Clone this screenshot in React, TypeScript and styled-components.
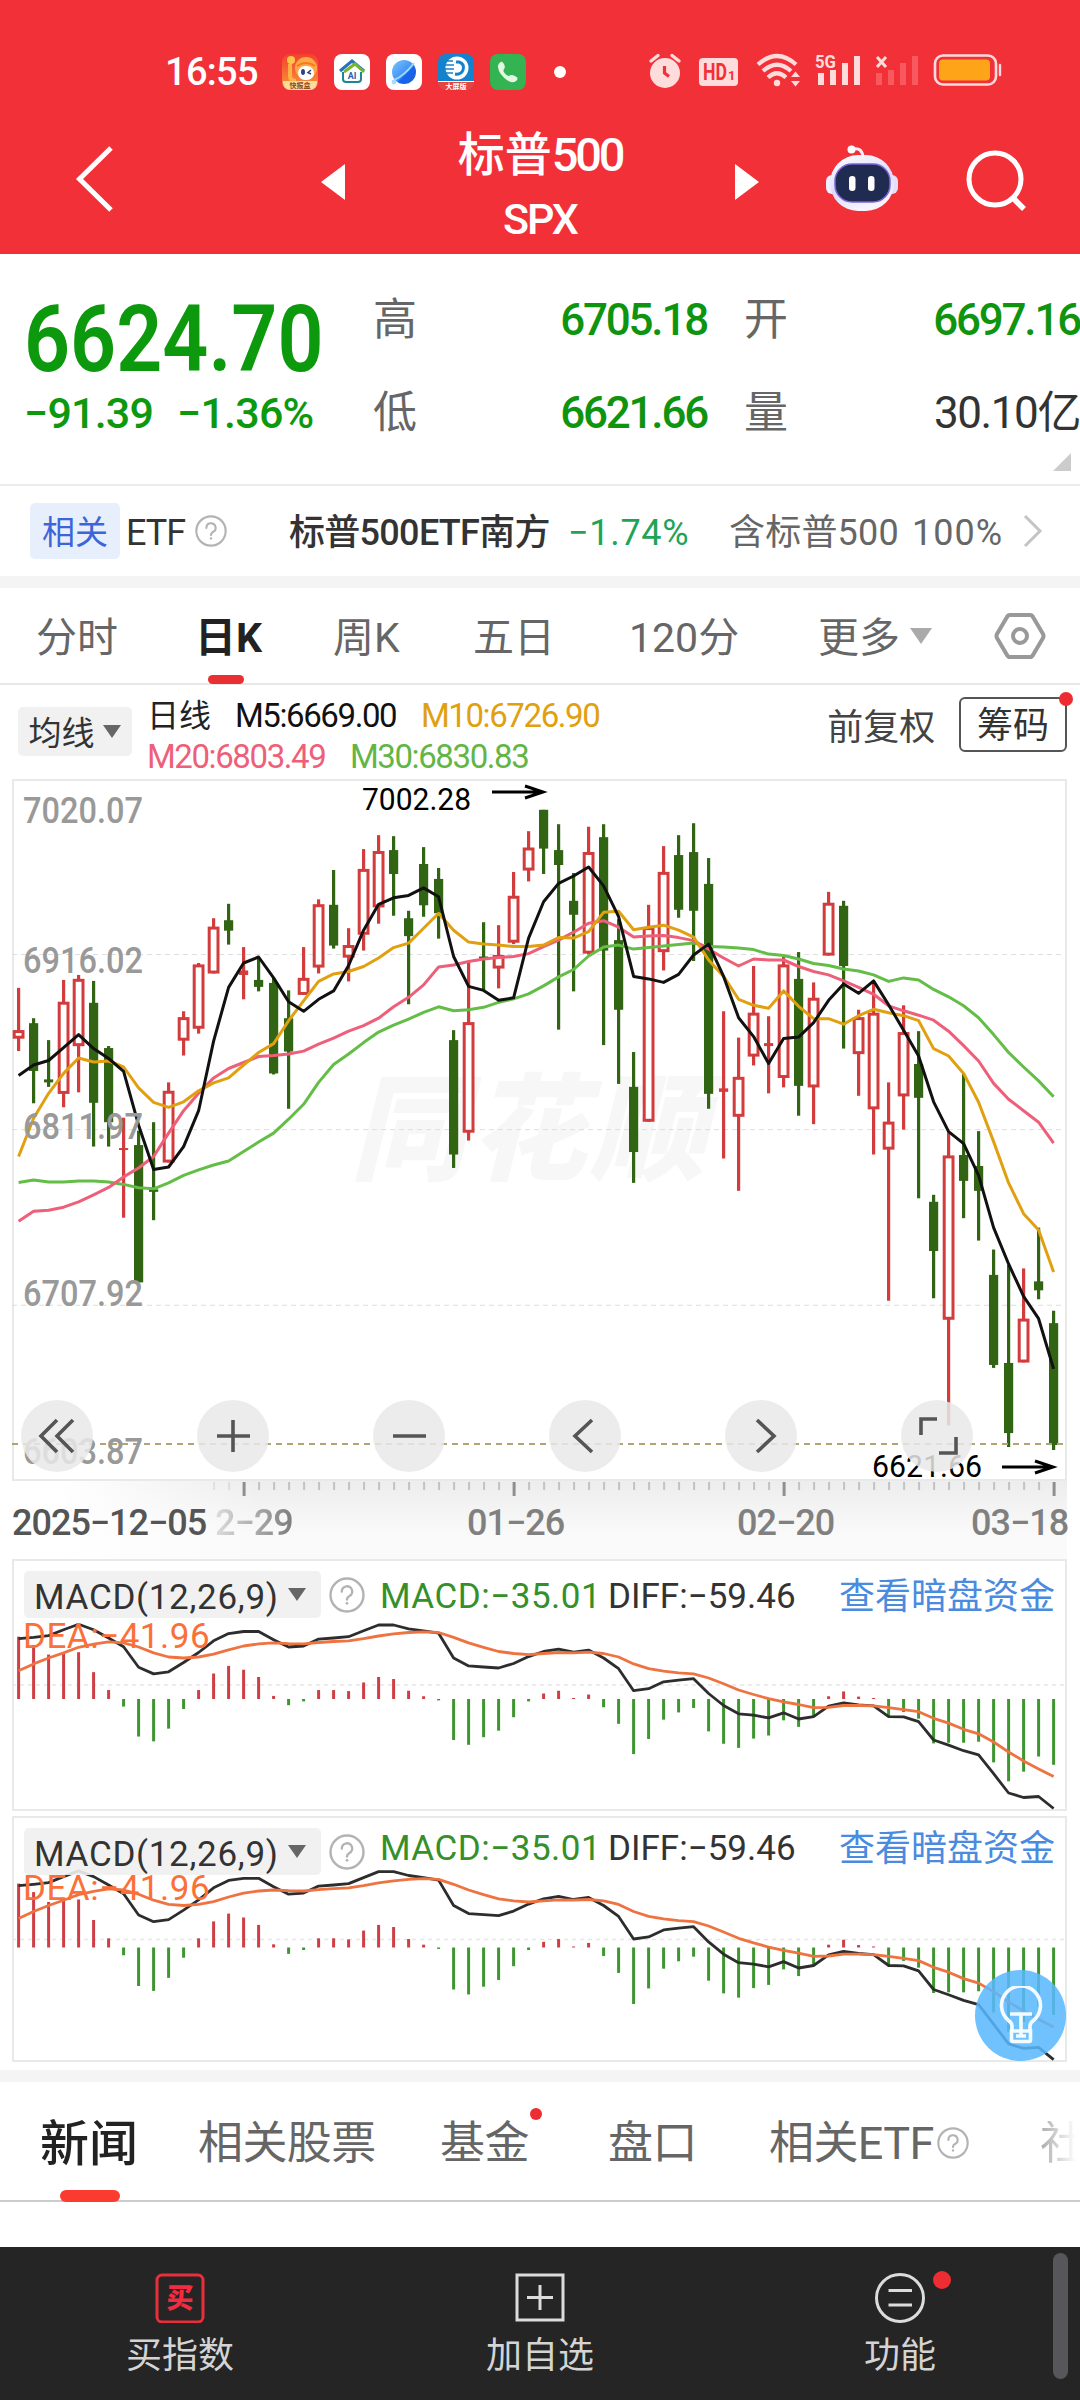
import React from 'react';
import styled, { createGlobalStyle, css } from 'styled-components';

const STEP = 15;
const FIRST_X = 6.6;

// high, body top, body bottom, low (chart units, downwards), 1 = up day
const CANDLES: Array<Array<number>> = [
    [438, 523, 540, 565, 1], [499, 509, 605, 670, 0], [543, 622, 628, 637, 0], [422, 466, 651, 678, 1],
    [412, 420, 555, 648, 1], [424, 468, 669, 757, 0], [555, 559, 708, 757, 0], [699, 760, 764, 900, 1],
    [725, 754, 1030, 1030, 0], [708, 843, 848, 905, 0], [628, 645, 789, 789, 1], [485, 497, 544, 574, 1],
    [388, 391, 520, 530, 1], [298, 315, 409, 409, 1], [269, 302, 323, 351, 0], [356, 403, 412, 461, 1],
    [378, 422, 436, 445, 0], [418, 428, 610, 612, 0], [443, 499, 566, 681, 0], [356, 418, 452, 452, 1],
    [260, 270, 397, 409, 1], [201, 271, 353, 359, 0], [318, 352, 377, 425, 1], [159, 199, 331, 363, 1],
    [131, 163, 276, 309, 1], [133, 161, 209, 293, 0], [283, 298, 334, 471, 0], [155, 189, 272, 295, 0],
    [197, 219, 288, 339, 0], [523, 543, 773, 800, 0], [385, 507, 729, 745, 1], [306, 375, 379, 442, 0],
    [312, 372, 399, 439, 1], [205, 253, 347, 350, 1], [123, 156, 202, 224, 1], [80, 80, 158, 209, 0],
    [109, 161, 191, 522, 0], [207, 263, 291, 445, 0], [114, 165, 369, 371, 1], [109, 135, 363, 553, 0],
    [300, 342, 482, 631, 0], [567, 637, 768, 830, 0], [271, 316, 707, 707, 1], [153, 205, 366, 403, 1],
    [131, 171, 281, 297, 0], [107, 165, 283, 384, 0], [177, 229, 651, 681, 0], [485, 640, 647, 781, 1],
    [538, 617, 697, 846, 1], [394, 488, 576, 594, 1], [495, 549, 555, 650, 1], [375, 391, 619, 638, 1],
    [366, 420, 635, 695, 0], [427, 458, 638, 712, 1], [245, 267, 373, 373, 1], [263, 273, 394, 560, 0],
    [482, 497, 571, 655, 1], [430, 488, 682, 773, 1], [628, 707, 763, 1067, 1], [473, 527, 656, 723, 1],
    [525, 591, 659, 861, 0], [854, 868, 967, 1062, 0], [728, 775, 1105, 1318, 1], [610, 774, 826, 901, 0],
    [726, 796, 846, 946, 0], [964, 1015, 1196, 1202, 0], [995, 1192, 1333, 1361, 0], [1002, 1103, 1191, 1191, 1],
    [920, 1028, 1046, 1064, 0], [1087, 1112, 1357, 1367, 0],
];

const AVERAGES = [
    {
        color: '#63bd46',
        values: [
            829, 824, 828, 828, 826, 826, 828, 833, 840, 842, 830, 815, 804, 794, 786, 767, 748, 730, 702, 672, 628, 592, 571,
            548, 527, 513, 501, 487, 476, 484, 482, 477, 467, 460, 450, 434, 416, 401, 374, 356, 352, 360, 357, 354, 351, 348,
            355, 356, 358, 361, 370, 373, 380, 389, 393, 400, 404, 412, 425, 418, 422, 441, 456, 474, 498, 532, 568, 597, 625,
            657,
        ],
    },
    {
        color: '#ee5f79',
        values: [
            907, 887, 885, 879, 868, 854, 839, 818, 800, 777, 730, 685, 650, 619, 600, 588, 576, 574, 571, 565, 551, 539, 525,
            514, 499, 476, 457, 432, 396, 392, 385, 380, 377, 375, 369, 355, 342, 326, 308, 303, 316, 336, 334, 333, 337, 343,
            360, 378, 394, 380, 382, 382, 395, 405, 412, 424, 437, 451, 474, 484, 493, 503, 525, 554, 585, 630, 662, 685, 708,
            750,
        ],
    },
    {
        color: '#e0a010',
        values: [
            777, 700, 650, 610, 579, 587, 585, 597, 639, 668, 678, 667, 645, 629, 619, 593, 568, 550, 504, 464, 425, 410, 405,
            395, 378, 357, 348, 318, 288, 322, 346, 350, 352, 355, 355, 352, 337, 338, 325, 286, 284, 321, 316, 312, 322, 336,
            382, 415, 461, 473, 479, 444, 475, 500, 500, 511, 494, 481, 488, 494, 504, 560, 575, 610, 668, 747, 830, 892, 925,
            1009,
        ],
    },
    {
        color: '#111111',
        values: [
            614, 593, 584, 558, 532, 560, 580, 606, 714, 803, 798, 757, 685, 545, 437, 388, 376, 418, 466, 485, 461, 444, 393,
            322, 270, 257, 252, 237, 255, 375, 435, 443, 463, 458, 338, 265, 228, 213, 195, 233, 295, 415, 420, 427, 411, 372,
            350, 415, 498, 536, 590, 540, 537, 508, 463, 430, 449, 424, 472, 523, 575, 667, 727, 751, 815, 920, 993, 1058,
            1103, 1204,
        ],
    },
];

const MACD_BARS = [
    181, 157, 129, 132, 136, 78, 26, -22, -109, -123, -86, -29, 26, 74, 96, 85, 64, 9, -18, -7, 26, 26, 23, 48, 64, 58, 24,
    8, -4, -119, -133, -111, -92, -53, -7, 16, 24, 3, 13, -24, -72, -160, -116, -60, -39, -26, -94, -130, -142, -115, -106,
    -62, -81, -52, 8, 22, 7, 3, -52, -38, -57, -129, -127, -127, -124, -184, -239, -211, -167, -191,
];

const MACD_ZERO = 462;

const DIFF = [
    287, 283, 278, 261, 245, 261, 285, 310, 370, 389, 383, 356, 327, 293, 272, 266, 266, 290, 311, 308, 288, 285, 281, 264,
    247, 247, 258, 264, 271, 343, 366, 369, 372, 359, 339, 324, 317, 326, 320, 343, 374, 438, 432, 412, 407, 403, 446, 481,
    505, 509, 517, 502, 520, 513, 483, 473, 479, 482, 513, 514, 528, 581, 596, 612, 624, 679, 735, 748, 745, 780,
];

const DEA = [
    380, 360, 343, 328, 312, 303, 296, 299, 311, 328, 340, 343, 340, 332, 319, 308, 302, 299, 301, 302, 298, 295, 293, 287,
    279, 273, 269, 267, 269, 283, 299, 312, 324, 330, 333, 330, 327, 328, 326, 330, 340, 360, 374, 381, 386, 389, 401, 418,
    436, 449, 461, 470, 478, 487, 486, 481, 481, 482, 487, 493, 499, 518, 532, 550, 563, 587, 616, 642, 665, 687,
];

const xAt = (i: number) => FIRST_X + i * STEP;
const priceY = (v: number) => v / 2.0103 - 9;

const toPoints = (values: Array<number>, y: (v: number) => number) =>
    values.map((v, i) => `${xAt(i).toFixed(1)},${y(v).toFixed(1)}`).join(' ');

const AXIS_LABELS = [
    { text: '7020.07', y: 43 },
    { text: '6916.02', y: 193 },
    { text: '6811.97', y: 359 },
    { text: '6707.92', y: 526 },
    { text: '6603.87', y: 684 },
];

const PriceChart: React.FunctionComponent = () => (
    <svg width="1056" height="702" viewBox="0 0 1056 702">
        <rect x="1" y="1" width="1053" height="700" fill="#fff" stroke="#e8eaea" strokeWidth="2" />
        <Watermark x="338" y="392" textLength="356">同花顺</Watermark>
        {[371, 723, 1076].map((v) => (
            <line key={v} x1="0" x2="1054" y1={priceY(v)} y2={priceY(v)} stroke="#dedede" strokeWidth="1" strokeDasharray="5 4" />
        ))}
        {CANDLES.map(([high, top, bottom, low, up], i) => {
            const x = xAt(i);
            const color = up ? '#d23c3d' : '#316413';
            const bodyTop = priceY(top);
            const bodyHeight = Math.max(priceY(bottom) - bodyTop, 2);
            const hollow = up === 1 && bodyHeight > 5;
            return (
                <g key={i}>
                    <line x1={x} x2={x} y1={priceY(high)} y2={priceY(low)} stroke={color} strokeWidth="3.2" />
                    {hollow ? (
                        <rect x={x - 4.4} y={bodyTop + 1.4} width="8.8" height={bodyHeight - 2.8} fill="#fff" stroke={color} strokeWidth="3" />
                    ) : (
                        <rect x={x - 4.6} y={bodyTop} width="9.2" height={bodyHeight} fill={color} />
                    )}
                </g>
            );
        })}
        {AVERAGES.map(({ color, values }) => (
            <polyline key={color} points={toPoints(values, priceY)} fill="none" stroke={color} strokeWidth="3" strokeLinejoin="round" />
        ))}
        <line x1="0" x2="1054" y1="665" y2="665" stroke="#b0a475" strokeWidth="1.8" strokeDasharray="6 5" />
        {AXIS_LABELS.map(({ text, y }) => (
            <AxisText key={text} x="11" y={y + 1} textLength="120" lengthAdjust="spacingAndGlyphs">
                {text}
            </AxisText>
        ))}
        <ExtremeText x="350" y="31" textLength="109" lengthAdjust="spacingAndGlyphs">
            7002.28
        </ExtremeText>
        <path d="M480 13H531M513 7L531 13L513 19" fill="none" stroke="#000" strokeWidth="3" />
        <ExtremeText x="860" y="698" textLength="110" lengthAdjust="spacingAndGlyphs">
            6621.66
        </ExtremeText>
        <path d="M990 688H1041M1023 682L1041 688L1023 694" fill="none" stroke="#000" strokeWidth="3" />
    </svg>
);

const TimeTicks: React.FunctionComponent = () => (
    <svg width="1056" height="16" viewBox="0 0 1056 16">
        {CANDLES.map((_, i) => {
            const major = i % 18 === 15;
            return i < 13 ? null : (
                <line
                    key={i}
                    x1={xAt(i) + 0.5}
                    x2={xAt(i) + 0.5}
                    y1="1"
                    y2={major ? 15 : 9}
                    stroke={major ? '#8f8f8f' : '#c2c2c2'}
                    strokeWidth={major ? 3 : 2}
                    opacity={i < 15 ? 0.4 : 1}
                />
            );
        })}
    </svg>
);

interface MacdChartProps {
    height: number;
    zero: number;
    grid: number;
    scale: number;
}

const MacdChart: React.FunctionComponent<MacdChartProps> = ({ height, zero, grid, scale }) => {
    const y = (v: number) => zero + ((v - MACD_ZERO) / 2.904) * scale;
    return (
        <svg width="1056" height={height} viewBox={`0 0 1056 ${height}`}>
            <rect x="1" y="1" width="1053" height={height - 2} fill="#fff" stroke="#e8eaea" strokeWidth="2" />
            <line x1="0" x2="1054" y1={grid} y2={grid} stroke="#e6e6e6" strokeWidth="1.4" strokeDasharray="4 4" />
            {MACD_BARS.map((v, i) => (
                <line
                    key={i}
                    x1={xAt(i)}
                    x2={xAt(i)}
                    y1={zero}
                    y2={y(MACD_ZERO - v)}
                    stroke={v > 0 ? '#cf3e45' : '#3f9530'}
                    strokeWidth="3"
                />
            ))}
            <polyline points={toPoints(DIFF, y)} fill="none" stroke="#2d2d2d" strokeWidth="2.8" strokeLinejoin="round" />
            <polyline points={toPoints(DEA, y)} fill="none" stroke="#ee7340" strokeWidth="2.8" strokeLinejoin="round" />
        </svg>
    );
};

const MacdPanel: React.FunctionComponent<MacdChartProps & { textTop: number }> = ({ textTop, ...chart }) => (
    <MacdBox $height={chart.height}>
        <MacdChart {...chart} />
        <MacdOverlay>
            <MacdChip>
                <MacdName>MACD(12,26,9)</MacdName>
                <Caret $size={9} $color="#666" />
            </MacdChip>
            <MacdHelp>
                <HelpIcon size={36} />
            </MacdHelp>
            <MacdValues $top={textTop}>
                <MacdValue $width={228} $color="#35902a" $track={0.5}>MACD:−35.01</MacdValue>
                <MacdValue $width={231} $color="#333" $track={0}>DIFF:−59.46</MacdValue>
                <MacdLink>查看暗盘资金</MacdLink>
            </MacdValues>
        </MacdOverlay>
        <DeaValue $top={textTop + 40}>DEA:−41.96</DeaValue>
    </MacdBox>
);

const HelpIcon: React.FunctionComponent<{ size: number }> = ({ size }) => (
    <svg width={size} height={size} viewBox="0 0 36 36" fill="none" stroke="#b3b3b3" strokeWidth="2.4">
        <circle cx="18" cy="18" r="16.5" />
        <path d="M12.8 14.5a5.2 5.2 0 1 1 7.4 4.7c-1.6.8-2.2 1.6-2.2 3.4" strokeLinecap="round" />
        <circle cx="18" cy="26.3" r="1.4" fill="#b3b3b3" stroke="none" />
    </svg>
);

const StatusApps: React.FunctionComponent = () => (
    <svg width="246" height="36" viewBox="0 0 246 36">
        <defs>
            <linearGradient id="mascot" x1="0" y1="0" x2="0" y2="1">
                <stop offset="0" stopColor="#f2402f" />
                <stop offset="1" stopColor="#fb9a35" />
            </linearGradient>
            <linearGradient id="planet" x1="0" y1="0" x2="1" y2="1">
                <stop offset="0" stopColor="#7cc8fb" />
                <stop offset="0.55" stopColor="#3f8ff5" />
                <stop offset="0.6" stopColor="#1765ea" />
                <stop offset="1" stopColor="#1c5ee0" />
            </linearGradient>
        </defs>
        <rect width="36" height="36" rx="8" fill="url(#mascot)" />
        <circle cx="24" cy="14" r="11" fill="#ffa845" />
        <circle cx="9" cy="6" r="4" fill="#ffc44d" />
        <path d="M8 10V22Q8 27 14 27" fill="none" stroke="#ffb347" strokeWidth="4" />
        <rect x="16" y="12" width="16" height="14" rx="7" fill="#fff" />
        <path d="M15 12Q24 6 33 12" fill="none" stroke="#f47a22" strokeWidth="2" />
        <ellipse cx="21" cy="18" rx="2" ry="3" fill="#33427a" />
        <path d="M29 16L26 18.5L29 20" fill="none" stroke="#33427a" strokeWidth="1.6" />
        <path d="M1 27H35V29Q34 36 27 36H9Q2 36 1 29Z" fill="#ffdc9c" />
        <TinyText x="18" y="34" fill="#8a4a1a">快报盒</TinyText>

        <rect x="52" width="36" height="36" rx="8" fill="#fff" />
        <path d="M58 17L70 7L82 17" fill="none" stroke="#2a6fc0" strokeWidth="3" />
        <path d="M62 18L73 10L82 18" fill="none" stroke="#76b82d" strokeWidth="3" />
        <path d="M61 18V25Q61 28 64 28H76Q79 28 79 25V18" fill="none" stroke="#1b8794" strokeWidth="2" />
        <HouseText x="70" y="25">AI</HouseText>

        <rect x="104" width="36" height="36" rx="8" fill="#fff" />
        <circle cx="122" cy="18" r="12" fill="url(#planet)" />
        <path d="M112 26Q122 22 132 9" fill="none" stroke="#9bd9ff" strokeWidth="2" />
        <circle cx="112" cy="28" r="2.4" fill="#a4dcff" />

        <rect x="156" width="36" height="36" rx="8" fill="#1482cc" />
        <circle cx="175" cy="14" r="11.5" fill="#fff" />
        <path d="M174 8H177Q183 10 181 16Q179 21 173 20" fill="none" stroke="#1482cc" strokeWidth="3" />
        <path d="M163 7H171M162 11H172M161 15H172M163 19H171" stroke="#1482cc" strokeWidth="1.6" />
        <path d="M156 27H192V29Q191 36 184 36H164Q157 36 156 29Z" fill="#e4463f" />
        <path d="M156 27.5H192" stroke="#fff" strokeWidth="1.2" />
        <TinyText x="174" y="34.5" fill="#fff">大屏版</TinyText>

        <rect x="208" width="36" height="36" rx="8" fill="#34b353" />
        <path
            d="M217 9.5q2-3 4.3-.6q2.6 3.5.8 6q-1.3 1.3 0 3.5q2 3 4.8 3.6q2.4-1.8 6 0q4 1.6 2 4.2q-3 4-9 .6q-9-6-10-14q0-2 1.1-3.3z"
            fill="#e3f7e5"
        />
    </svg>
);

const StatusSignals: React.FunctionComponent = () => (
    <svg width="356" height="40" viewBox="0 0 356 40">
        <g fill="#ffdcdc">
            <circle cx="18" cy="21" r="15" />
            <path d="M4 9L11 3.500M25 3.500L32 9" stroke="#ffdcdc" strokeWidth="3.4" strokeLinecap="round" />
            <path d="M17.5 14V21L22 24.5" stroke="#f23038" strokeWidth="3.2" fill="none" />
            <rect x="52" y="6" width="39" height="28" rx="4" />
        </g>
        <BadgeText x="56" y="28" textLength="24" lengthAdjust="spacingAndGlyphs">HD</BadgeText>
        <BadgeText x="81" y="28" $small>1</BadgeText>
        <g fill="none" stroke="#ffdcdc" strokeWidth="4.2">
            <path d="M111 12.5Q130-4.5 149 12.5" />
            <path d="M116 19Q130 6.5 144 19" />
            <path d="M121 25.5Q130 17 139 25.5" />
        </g>
        <circle cx="130" cy="31" r="3.2" fill="#ffdcdc" />
        <path d="M144 25L148.5 19.5L153 25ZM144 29L148.5 34.5L153 29Z" fill="#ffdcdc" />
        <FiveG x="168" y="16" textLength="21" lengthAdjust="spacingAndGlyphs">5G</FiveG>
        <path d="M171 21h6v12h-6zM183 18h6v15h-6zM195 11h6v22h-6zM207 4h6v29h-6z" fill="#ffdcdc" />
        <path d="M229 21h6v12h-6zM241 18h6v15h-6zM253 11h6v22h-6zM265 4h6v29h-6z" fill="#f7595f" />
        <path d="M230 5L239 15M239 5L230 15" stroke="#ffdcdc" strokeWidth="3" />
        <rect x="288" y="3.5" width="61" height="29" rx="8" fill="none" stroke="#ffdcdc" strokeWidth="2.6" />
        <rect x="292" y="7.5" width="51" height="21" rx="4" fill="#fda418" />
        <path d="M353 13V23" stroke="#ffdcdc" strokeWidth="2.4" strokeLinecap="round" />
    </svg>
);

const RobotIcon: React.FunctionComponent = () => (
    <svg width="72" height="68" viewBox="0 0 72 68">
        <defs>
            <linearGradient id="shell" x1="0" y1="0" x2="0.4" y2="1">
                <stop offset="0" stopColor="#ffffff" />
                <stop offset="0.6" stopColor="#dcdcfa" />
                <stop offset="1" stopColor="#f6f4ff" />
            </linearGradient>
        </defs>
        <path d="M27 4Q36 2 37 12" fill="none" stroke="#f4ecf6" strokeWidth="3" />
        <circle cx="25.5" cy="4.5" r="4" fill="#fff" />
        <rect x="0" y="30" width="12" height="19" rx="6" fill="#f1effd" />
        <rect x="60" y="30" width="12" height="19" rx="6" fill="#e2dff9" />
        <rect x="4" y="10" width="64" height="56" rx="28" fill="url(#shell)" />
        <rect x="9" y="19" width="55" height="38" rx="17" fill="#202b51" stroke="#7d63d6" strokeWidth="1.5" />
        <rect x="23" y="31" width="6.5" height="15" rx="3.2" fill="#fff" />
        <rect x="42" y="31" width="6.5" height="15" rx="3.2" fill="#fff" />
    </svg>
);

const PERIODS = [
    { text: '分时', width: 159 },
    { text: '日K', width: 138, active: true },
    { text: '周K', width: 140 },
    { text: '五日', width: 156 },
    { text: '120分', width: 189 },
];

const NEWS_TABS = [
    { text: '相关股票', width: 242 },
    { text: '基金', width: 168, dot: true },
    { text: '盘口', width: 161 },
];

const CONTROLS = [
    'M36 20L20 36L36 52M52 20L36 36L52 52',
    'M20 36H53M36 20V52',
    'M20 36H53',
    'M43 20L26 36L43 52',
    'M32 20L49 36L32 52',
    'M20 35V19H36M55 37V53H38',
];

const App: React.FunctionComponent = () => (
    <Screen>
        <GlobalStyle />
        <Header>
            <StatusBar>
                <Clock>16:55</Clock>
                <StatusApps />
                <MoreDot />
                <StatusSignals />
            </StatusBar>
            <TitleBar>
                <svg width="321" height="70" viewBox="0 0 321 70">
                    <path d="M111 4L79.5 35L111 66" fill="none" stroke="#fff" strokeWidth="5" />
                </svg>
                <TitleArrow $direction="left" />
                <TitleText>
                    <IndexName>标普<span>500</span></IndexName>
                    <IndexCode>SPX</IndexCode>
                </TitleText>
                <TitleArrow $direction="right" />
                <RobotSlot>
                    <RobotIcon />
                </RobotSlot>
                <svg width="62" height="68" viewBox="0 0 62 68" fill="none" stroke="#fff">
                    <circle cx="29" cy="34" r="26" strokeWidth="5" />
                    <path d="M47 53L58 64" strokeWidth="5.5" />
                </svg>
            </TitleBar>
        </Header>

        <Quote>
            <PriceColumn>
                <Price>6624.70</Price>
                <ChangeRow>
                    <span>−91.39</span>
                    <span>−1.36%</span>
                </ChangeRow>
            </PriceColumn>
            <StatGrid>
                <StatLabel>高</StatLabel>
                <StatValue>6705.18</StatValue>
                <StatLabel>开</StatLabel>
                <StatValue>6697.16</StatValue>
                <StatLabel>低</StatLabel>
                <StatValue>6621.66</StatValue>
                <StatLabel>量</StatLabel>
                <StatValue $dark>30.10亿</StatValue>
            </StatGrid>
            <Corner />
        </Quote>

        <Related>
            <RelatedTag>相关</RelatedTag>
            <RelatedText $width={69} $track={-1}>ETF</RelatedText>
            <HelpSlot>
                <HelpIcon size={32} />
            </HelpSlot>
            <RelatedText $width={279} $bold $track={-0.7}>标普500ETF南方</RelatedText>
            <RelatedText $width={161} $color="#1fa457" $track={0.7}>−1.74%</RelatedText>
            <RelatedText $width={183} $color="#666" $track={0.2}>含标普500</RelatedText>
            <RelatedText $width={111} $color="#666" $track={1}>100%</RelatedText>
            <svg width="20" height="34" viewBox="0 0 20 34">
                <path d="M2 2L17 17L2 32" fill="none" stroke="#c4c4c4" strokeWidth="3" />
            </svg>
        </Related>
        <Band />

        <Periods>
            {PERIODS.map(({ text, width, active }) => (
                <Period key={text} $width={width} $active={active}>
                    {text}
                </Period>
            ))}
            <Period $width={92}>更多</Period>
            <Caret $size={11} $color="#aaa" />
            <HexIcon width="52" height="50" viewBox="0 0 52 50" fill="none" stroke="#999" strokeWidth="4">
                <path d="M16 4H36Q38 4 39 6L49 23Q50 25 49 27L39 44Q38 46 36 46H16Q14 46 13 44L3 27Q2 25 3 23L13 6Q14 4 16 4Z" />
                <circle cx="26" cy="25" r="7" />
            </HexIcon>
        </Periods>

        <AverageBar>
            <AverageChip>
                <span>均线</span>
                <Caret $size={9} $color="#666" />
            </AverageChip>
            <AverageLines>
                <AverageLine>
                    <AverageItem $width={88} $color="#222" $cjk>日线</AverageItem>
                    <AverageItem $width={186} $color="#111">M5:6669.00</AverageItem>
                    <AverageItem $width={180} $color="#e0a010">M10:6726.90</AverageItem>
                </AverageLine>
                <AverageLine>
                    <AverageItem $width={203} $color="#ee5f79">M20:6803.49</AverageItem>
                    <AverageItem $width={180} $color="#63b545">M30:6830.83</AverageItem>
                </AverageLine>
            </AverageLines>
            <AdjustText>前复权</AdjustText>
            <ChipsButton>
                筹码
                <Dot $size={14} $top={-7} $right={-8} />
            </ChipsButton>
        </AverageBar>

        <ChartArea>
            <PriceChart />
            <Controls>
                {CONTROLS.map((d) => (
                    <Control key={d}>
                        <svg width="72" height="72" viewBox="0 0 72 72">
                            <path d={d} fill="none" stroke="#555" strokeWidth="3.6" />
                        </svg>
                    </Control>
                ))}
            </Controls>
        </ChartArea>

        <TimeAxis>
            <TimeTicks />
            <Dates>
                <FirstDate>2025−12−05</FirstDate>
                <DateText $width={252} $faded>2−29</DateText>
                <DateText $width={270}>01−26</DateText>
                <DateText $width={234}>02−20</DateText>
                <DateText $width={96}>03−18</DateText>
            </Dates>
        </TimeAxis>

        <MacdArea>
            <MacdPanel height={252} zero={140} grid={126} scale={1} textTop={20} />
            <MacdPanel height={246} zero={131.5} grid={123.5} scale={1.025} textTop={15} />
            <TipButton>
                <svg width="48" height="60" viewBox="0 0 48 60" fill="none" stroke="#f2fbff" strokeWidth="3.6">
                    <path d="M15 44V40Q15 37 11.5 34.5A19.5 19.5 0 1 1 36.5 34.5Q33 37 33 40V44" />
                    <path d="M14.5 45H33.5V54Q33.5 55.5 32 55.5H16Q14.5 55.5 14.5 54ZM13 28H35M24 28V50M19 50H29" />
                </svg>
            </TipButton>
        </MacdArea>
        <Band />

        <NewsTabs>
            <ActiveNews>新闻</ActiveNews>
            {NEWS_TABS.map(({ text, width, dot }) => (
                <NewsTab key={text} $width={width}>
                    <span>
                        {text}
                        {dot && <Dot $size={12} $top={-9} $right={-13} />}
                    </span>
                </NewsTab>
            ))}
            <NewsTab $width={168}>相关ETF</NewsTab>
            <HelpIcon size={32} />
            <NewsTab $width={52} $faded>社</NewsTab>
        </NewsTabs>
        <Blank />

        <BottomBar>
            <Action>
                <svg width="50" height="50" viewBox="0 0 50 50">
                    <rect x="2" y="2" width="46" height="47" rx="5" fill="none" stroke="#e8303a" strokeWidth="3" />
                    <BuyText x="25" y="35">买</BuyText>
                </svg>
                买指数
            </Action>
            <Action>
                <svg width="50" height="50" viewBox="0 0 50 50" fill="none" stroke="#dcdcdc" strokeWidth="3">
                    <path d="M2 2H48V47H2ZM12 24.5H38M25 12V37" />
                </svg>
                加自选
            </Action>
            <Action>
                <svg width="52" height="50" viewBox="0 0 52 50" fill="none" stroke="#dcdcdc" strokeWidth="3">
                    <circle cx="26" cy="25" r="23.5" />
                    <path d="M14.5 17.5H38M14.5 32H38" />
                </svg>
                功能
                <Dot $size={18} $top={24} $right={129} />
            </Action>
            <ScrollThumb />
        </BottomBar>
    </Screen>
);

export default App;

const GlobalStyle = createGlobalStyle`
    body {
        margin: 0;
        background: #fff;
    }
    * {
        box-sizing: border-box;
    }
    svg {
        display: block;
        flex: none;
    }
`;

const baseFont = css`
    font-family: Roboto, 'Noto Sans CJK SC', sans-serif;
`;

const Screen = styled.div`
    ${baseFont}
    width: 1080px;
    height: 2400px;
    overflow: hidden;
    display: flex;
    flex-direction: column;
    line-height: 1;
    white-space: nowrap;
    color: #333;
`;

const Header = styled.div`
    height: 254px;
    flex: none;
    background: #f23038;
    color: #fff;
`;

const StatusBar = styled.div`
    height: 108px;
    padding: 35px 0 0 165px;
    display: flex;
    align-items: center;
`;

const Clock = styled.div`
    width: 117px;
    font-size: 38px;
    font-weight: 500;
    letter-spacing: -0.7px;
`;

const MoreDot = styled.div`
    width: 12px;
    height: 12px;
    border-radius: 50%;
    background: #fff;
    margin: 0 81px 0 26px;
`;

const TitleBar = styled.div`
    height: 146px;
    display: flex;
    align-items: center;
    padding-bottom: 4px;
`;

const TitleArrow = styled.div<{ $direction: 'left' | 'right' }>`
    border: 18px solid transparent;
    border-width: 18px 0;
    ${({ $direction }) => ($direction === 'left' ? 'border-right' : 'border-left')}: 24px solid #fff;
    margin-top: 6px;
`;

const TitleText = styled.div`
    width: 390px;
    display: flex;
    flex-direction: column;
    align-items: center;
    gap: 20px;
    padding-top: 13px;
`;

const IndexName = styled.div`
    font-size: 47px;
    font-weight: 500;
    span {
        letter-spacing: -3.2px;
    }
`;

const IndexCode = styled.div`
    font-size: 43px;
    font-weight: 500;
    letter-spacing: -2px;
`;

const RobotSlot = styled.div`
    width: 207px;
    padding-left: 67px;
`;

const Quote = styled.div`
    position: relative;
    height: 232px;
    flex: none;
    display: flex;
    border-bottom: 2px solid #ececec;
`;

const PriceColumn = styled.div`
    width: 373px;
    padding: 40px 0 0 24px;
    color: #0d990d;
`;

const Price = styled.div`
    font-size: 92px;
    font-weight: 600;
    transform: scaleX(0.877);
    transform-origin: left;
`;

const ChangeRow = styled.div`
    display: flex;
    gap: 24px;
    margin-top: 6px;
    font-size: 43px;
    font-weight: 500;
    letter-spacing: -0.8px;
`;

const StatGrid = styled.div`
    display: grid;
    grid-template-columns: 44px 290px 81px 292px;
    grid-template-rows: 93px 93px;
    padding-top: 19px;
`;

const StatLabel = styled.div`
    width: 44px;
    justify-self: end;
    align-self: center;
    font-size: 44px;
    color: #666;
`;

const StatValue = styled.div<{ $dark?: boolean }>`
    align-self: center;
    justify-self: end;
    font-size: 44px;
    font-weight: 500;
    letter-spacing: -2.2px;
    color: ${({ $dark }) => ($dark ? '#333' : '#0f940f')};
    ${({ $dark }) => $dark && 'font-weight: 400; letter-spacing: -1.4px;'}
`;

const Corner = styled.div`
    position: absolute;
    right: 9px;
    bottom: 13px;
    border-left: 18px solid transparent;
    border-bottom: 18px solid #ccc;
`;

const Related = styled.div`
    height: 90px;
    flex: none;
    padding-left: 30px;
    display: flex;
    align-items: center;
`;

const RelatedTag = styled.div`
    width: 90px;
    height: 56px;
    margin-right: 6px;
    border-radius: 5px;
    background: #e8effc;
    color: #3c66d8;
    font-size: 33px;
    line-height: 59px;
    text-align: center;
`;

const RelatedText = styled.div<{ $width: number; $track: number; $color?: string; $bold?: boolean }>`
    width: ${({ $width }) => $width}px;
    flex: none;
    padding-top: 4px;
    font-size: 36px;
    font-weight: ${({ $bold }) => ($bold ? 500 : 400)};
    letter-spacing: ${({ $track }) => $track}px;
    color: ${({ $color }) => $color || '#333'};
`;

const HelpSlot = styled.div`
    width: 94px;
`;

const Band = styled.div`
    height: 12px;
    flex: none;
    background: #f4f4f4;
`;

const Periods = styled.div`
    height: 97px;
    flex: none;
    padding-left: 36px;
    display: flex;
    align-items: center;
    border-bottom: 2px solid #e8e8e8;
`;

const Period = styled.div<{ $width: number; $active?: boolean }>`
    position: relative;
    width: ${({ $width }) => $width}px;
    flex: none;
    padding-top: 5px;
    font-size: 41px;
    color: #666;
    ${({ $active }) =>
        $active &&
        css`
            color: #222;
            font-weight: 700;
            &::after {
                content: '';
                position: absolute;
                left: 13px;
                bottom: -25px;
                width: 36px;
                height: 9px;
                border-radius: 5px;
                background: #ea2f33;
            }
        `}
`;

const Caret = styled.div<{ $size: number; $color: string }>`
    border: ${({ $size }) => $size}px solid transparent;
    border-bottom: 0;
    border-top: ${({ $size }) => $size * 1.5}px solid ${({ $color }) => $color};
`;

const HexIcon = styled.svg`
    margin-left: 62px;
`;

const AverageBar = styled.div`
    position: relative;
    height: 94px;
    flex: none;
    padding: 12px 13px 0 18px;
    display: flex;
`;

const AverageChip = styled.div`
    width: 114px;
    height: 49px;
    margin: 10px 15px 0 0;
    display: flex;
    align-items: center;
    justify-content: center;
    gap: 9px;
    border-radius: 5px;
    background: #f1f1f1;
    font-size: 33px;
    span {
        padding-top: 3px;
    }
`;

const AverageLines = styled.div`
    width: 681px;
`;

const AverageLine = styled.div`
    height: 41px;
    display: flex;
    align-items: center;
`;

const AverageItem = styled.div<{ $width: number; $color: string; $cjk?: boolean }>`
    width: ${({ $width }) => $width}px;
    margin-top: -5px;
    padding-top: ${({ $cjk }) => ($cjk ? 2 : 0)}px;
    font-size: ${({ $cjk }) => ($cjk ? 32 : 33)}px;
    letter-spacing: ${({ $cjk }) => ($cjk ? 0 : -1.4)}px;
    color: ${({ $color }) => $color};
`;

const AdjustText = styled.div`
    width: 132px;
    margin-top: 13px;
    font-size: 36px;
    color: #444;
`;

const ChipsButton = styled.div`
    position: relative;
    width: 108px;
    height: 55px;
    border: 2px solid #555;
    border-radius: 6px;
    font-size: 36px;
    line-height: 55px;
    text-align: center;
`;

const Dot = styled.i<{ $size: number; $top: number; $right: number }>`
    position: absolute;
    top: ${({ $top }) => $top}px;
    right: ${({ $right }) => $right}px;
    width: ${({ $size }) => $size}px;
    height: ${({ $size }) => $size}px;
    border-radius: 50%;
    background: #ee2d33;
`;

const ChartArea = styled.div`
    position: relative;
    height: 702px;
    flex: none;
    padding-left: 12px;
`;

const Watermark = styled.text`
    font: italic 900 116px 'Noto Sans CJK SC', sans-serif;
    fill: #f7f7f7;
`;

const AxisText = styled.text`
    ${baseFont}
    font-size: 36px;
    font-weight: 500;
    fill: #999;
`;

const ExtremeText = styled.text`
    ${baseFont}
    font-size: 31px;
    fill: #000;
`;

const TinyText = styled.text`
    ${baseFont}
    font-size: 7px;
    font-weight: 700;
    text-anchor: middle;
`;

const HouseText = styled.text`
    ${baseFont}
    font-size: 9px;
    font-weight: 700;
    text-anchor: middle;
    fill: #1a66b5;
`;

const BadgeText = styled.text<{ $small?: boolean }>`
    ${baseFont}
    font-size: ${({ $small }) => ($small ? 13 : 23)}px;
    font-weight: 700;
    fill: #f23038;
`;

const FiveG = styled.text`
    ${baseFont}
    font-size: 19px;
    font-weight: 700;
    fill: #ffdcdc;
`;

const BuyText = styled.text`
    font: 900 27px 'Noto Sans CJK SC', sans-serif;
    text-anchor: middle;
    fill: #f22c40;
`;

const Controls = styled.div`
    position: absolute;
    left: 21px;
    top: 621px;
    display: flex;
    gap: 104px;
`;

const Control = styled.div`
    width: 72px;
    height: 72px;
    border-radius: 50%;
    background: rgba(233, 233, 233, 0.85);
`;

const TimeAxis = styled.div`
    height: 78px;
    flex: none;
    width: 1067px;
    padding-left: 12px;
    background:
        linear-gradient(90deg, #fff 60px, rgba(255, 255, 255, 0) 260px),
        linear-gradient(#ededed, #fafafa 70%);
`;

const Dates = styled.div`
    display: flex;
    align-items: center;
    margin-top: 8px;
    font-size: 36px;
    font-weight: 500;
    letter-spacing: -1px;
`;

const FirstDate = styled.div`
    width: 204px;
    color: #555;
`;

const DateText = styled.div<{ $width: number; $faded?: boolean }>`
    width: ${({ $width }) => $width}px;
    flex: none;
    color: #808080;
    ${({ $faded }) =>
        $faded &&
        css`
            color: transparent;
            background: linear-gradient(90deg, #ddd, #808080 75px);
            background-clip: text;
        `}
`;

const MacdArea = styled.div`
    position: relative;
    height: 511px;
    flex: none;
    padding: 0 0 0 12px;
    display: flex;
    flex-direction: column;
    gap: 5px;
`;

const MacdBox = styled.div<{ $height: number }>`
    position: relative;
    height: ${({ $height }) => $height}px;
`;

const MacdOverlay = styled.div`
    position: absolute;
    top: 12px;
    left: 12px;
    display: flex;
`;

const MacdChip = styled.div`
    width: 297px;
    height: 47px;
    padding-left: 10px;
    display: flex;
    align-items: center;
    border-radius: 5px;
    background: rgba(240, 240, 240, 0.9);
`;

const MacdName = styled.div`
    width: 254px;
    padding-top: 5px;
    font-size: 35px;
    letter-spacing: 0.7px;
`;

const MacdHelp = styled.div`
    margin: 6px 15px 0 8px;
`;

const MacdValues = styled.div<{ $top: number }>`
    display: flex;
    margin-top: ${({ $top }) => $top - 12}px;
`;

const MacdValue = styled.div<{ $width: number; $color: string; $track: number }>`
    width: ${({ $width }) => $width}px;
    font-size: 35px;
    letter-spacing: ${({ $track }) => $track}px;
    color: ${({ $color }) => $color};
`;

const MacdLink = styled.div`
    font-size: 36px;
    color: #4a8be0;
`;

const DeaValue = styled.div<{ $top: number }>`
    position: absolute;
    top: ${({ $top }) => $top}px;
    left: 11px;
    font-size: 35px;
    letter-spacing: 0.5px;
    color: #fb7038;
`;

const TipButton = styled.div`
    position: absolute;
    right: 14px;
    top: 411px;
    width: 91px;
    height: 91px;
    padding: 16px 0 0 22px;
    border-radius: 50%;
    background: rgba(88, 184, 255, 0.86);
`;

const NewsTabs = styled.div`
    height: 120px;
    flex: none;
    padding: 4px 0 0 40px;
    display: flex;
    align-items: center;
    border-bottom: 2px solid #ccc;
`;

const ActiveNews = styled.div`
    position: relative;
    width: 158px;
    flex: none;
    padding-top: 2px;
    font-size: 49px;
    font-weight: 500;
    color: #222;
    &::after {
        content: '';
        position: absolute;
        left: 20px;
        bottom: -33px;
        width: 60px;
        height: 12px;
        border-radius: 6px;
        background: #fb3b30;
    }
`;

const NewsTab = styled.div<{ $width: number; $faded?: boolean }>`
    width: ${({ $width }) => $width}px;
    flex: none;
    font-size: 45px;
    letter-spacing: -0.6px;
    color: #666;
    span {
        position: relative;
    }
    ${({ $faded }) =>
        $faded &&
        css`
            margin-left: 71px;
            color: transparent;
            background: linear-gradient(90deg, #aaa, #fff 36px);
            background-clip: text;
        `}
`;

const Blank = styled.div`
    height: 45px;
    flex: none;
`;

const BottomBar = styled.div`
    position: relative;
    height: 153px;
    flex: none;
    display: grid;
    grid-template-columns: repeat(3, 1fr);
    background: #252525;
`;

const Action = styled.div`
    position: relative;
    display: flex;
    flex-direction: column;
    align-items: center;
    gap: 15px;
    padding-top: 26px;
    font-size: 36px;
    color: #d4d4d4;
`;

const ScrollThumb = styled.div`
    position: absolute;
    top: 6px;
    right: 12px;
    width: 15px;
    height: 126px;
    border-radius: 8px;
    background: #57575b;
`;
